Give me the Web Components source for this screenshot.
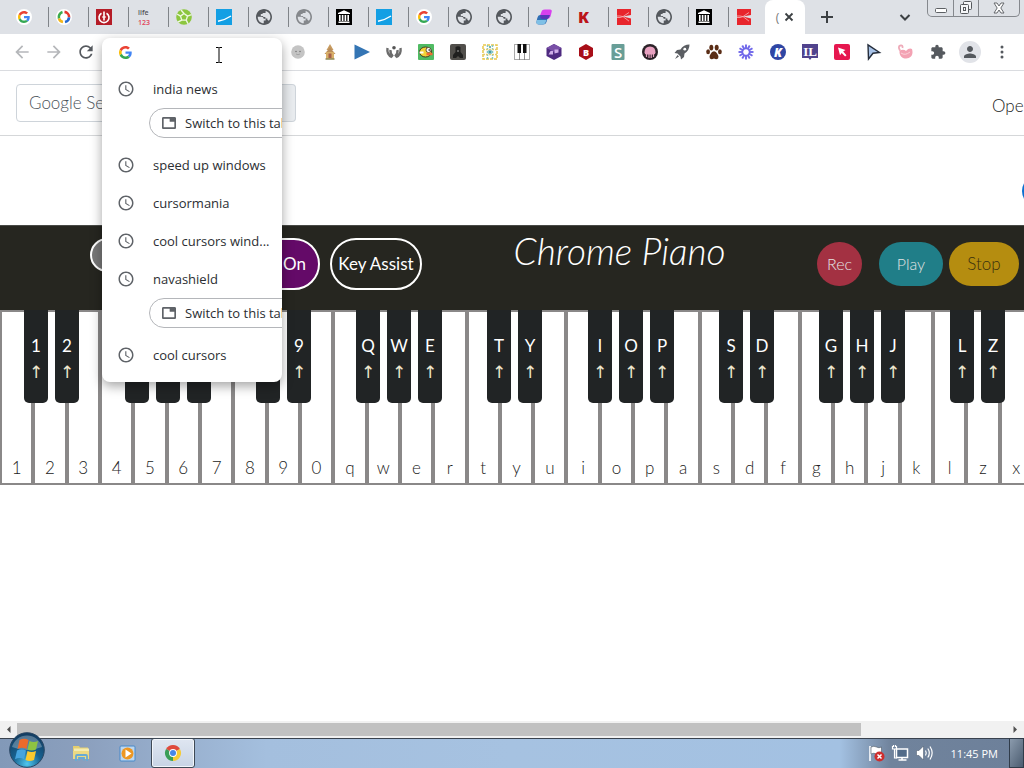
<!DOCTYPE html>
<html lang="en">
<head>
<meta charset="utf-8">
<title>Chrome Piano</title>
<style>
  html, body {
    height: 100%;
    margin: 0;
    overflow: hidden;
  }
  body {
    background: #fff;
    font-family: Lato, "Open Sans", sans-serif;
  }
</style>
</head>
<body>

<desktop-shell>
  <browser-tabs slot="tabs"></browser-tabs>
  <browser-toolbar slot="toolbar">
    <suggestion-list>
      <suggestion-item switchable>india news</suggestion-item>
      <suggestion-item>speed up windows</suggestion-item>
      <suggestion-item>cursormania</suggestion-item>
      <suggestion-item>cool cursors wind...</suggestion-item>
      <suggestion-item switchable>navashield</suggestion-item>
      <suggestion-item>cool cursors</suggestion-item>
    </suggestion-list>
  </browser-toolbar>
  <piano-page slot="page">
    <piano-keyboard></piano-keyboard>
  </piano-page>
  <scroll-strip slot="scroll"></scroll-strip>
  <task-bar slot="taskbar"></task-bar>
</desktop-shell>

<template id="desktop-shell">
  <style>
    :host {
      display: flex;
      flex-direction: column;
      height: 100vh;
      overflow: hidden;
    }
    ::slotted([slot="toolbar"]) { z-index: 2; }
    ::slotted([slot="page"]) { flex: 1; min-height: 0; }
    ::slotted([slot="taskbar"]) { z-index: 3; }
  </style>
  <slot name="tabs"></slot>
  <slot name="toolbar"></slot>
  <slot name="page"></slot>
  <slot name="scroll"></slot>
  <slot name="taskbar"></slot>
</template>

<template id="browser-tabs">
  <style>
    :host {
      display: flex;
      align-items: center;
      height: 34px;
      padding-left: 9px;
      background: #dee1e6;
      font-family: "Open Sans", sans-serif;
      position: relative;
    }
    button {
      display: flex;
      align-items: center;
      justify-content: center;
      padding: 0;
      border: 0;
      background: none;
      color: #3c4043;
    }
    .tabs { display: flex; align-items: center; }
    .tab {
      justify-content: flex-start;
      width: 40px;
      height: 20px;
      padding-left: 7px;
      border-right: 1px solid #808489;
      box-sizing: border-box;
    }
    .tab:last-child { width: 36px; border: 0; }
    .active {
      display: flex;
      align-items: center;
      justify-content: center;
      gap: 5px;
      align-self: stretch;
      width: 40px;
      border-radius: 8px 8px 0 0;
      background: #fff;
      color: #777;
      font-size: 12px;
    }
    .new { width: 24px; height: 24px; margin-left: 10px; }
    .search { width: 24px; height: 24px; margin-left: auto; margin-right: 10px; }
    .window {
      display: flex;
      align-self: flex-start;
      height: 17px;
      margin-right: 4px;
      box-sizing: border-box;
      border: 1px solid #85888d;
      border-top: 0;
      border-radius: 0 0 5px 5px;
    }
    .window button { width: 25px; }
    .window button + button { border-left: 1px solid #85888d; }
    .window .close { width: 41px; }
  </style>
  <div class="tabs" role="tablist"></div>
  <div class="active" role="tab" aria-selected="true"><span>(</span><button aria-label="Close tab"><app-icon name="close" size="10"></app-icon></button></div>
  <button class="new" aria-label="New tab"><app-icon name="plus" size="12"></app-icon></button>
  <button class="search" aria-label="Search tabs"><app-icon name="chevron" size="12"></app-icon></button>
  <div class="window">
    <button aria-label="Minimize"><app-icon name="win-min" size="14"></app-icon></button>
    <button aria-label="Restore"><app-icon name="win-max" size="14"></app-icon></button>
    <button class="close" aria-label="Close"><app-icon name="win-close" size="14"></app-icon></button>
  </div>
</template>

<template id="browser-toolbar">
  <style>
    :host {
      display: flex;
      align-items: center;
      height: 36px;
      padding: 0 6px;
      border-bottom: 1px solid #dadce0;
      background: #fff;
      position: relative;
    }
    button {
      display: flex;
      align-items: center;
      justify-content: center;
      width: 32px;
      height: 32px;
      padding: 0;
      border: 0;
      background: none;
      color: #55595e;
    }
    button:disabled { color: #b5b7ba; }
    .extensions { display: flex; }
    .profile span {
      display: flex;
      align-items: center;
      justify-content: center;
      width: 22px;
      height: 22px;
      border-radius: 50%;
      background: #e1e3e8;
    }
    .omnibox {
      position: relative;
      flex: 1;
      height: 32px;
    }
    ::slotted(suggestion-list) {
      position: absolute;
      top: 2px;
      left: 0;
      right: 0;
    }
  </style>
  <button disabled aria-label="Back"><app-icon name="back" size="20"></app-icon></button>
  <button disabled aria-label="Forward"><app-icon name="forward" size="20"></app-icon></button>
  <button aria-label="Reload"><app-icon name="reload" size="20"></app-icon></button>
  <div class="omnibox"><slot></slot></div>
  <div class="extensions"></div>
  <button class="profile" aria-label="Profile"><span><app-icon name="person" size="18"></app-icon></span></button>
  <button aria-label="Menu"><app-icon name="dots" size="16"></app-icon></button>
</template>

<template id="suggestion-list">
  <style>
    :host {
      display: block;
      box-sizing: border-box;
      padding-bottom: 8px;
      border-radius: 8px;
      background: #fff;
      box-shadow: 0 4px 12px rgba(0, 0, 0, .36);
      font: 14px/20px "Open Sans", sans-serif;
      overflow: hidden;
    }
    .field {
      display: flex;
      align-items: center;
      gap: 12px;
      height: 28px;
      margin-bottom: 4px;
      padding-left: 17px;
      position: relative;
    }
    input {
      flex: 1;
      min-width: 0;
      border: 0;
      outline: 0;
      background: none;
      font: inherit;
    }
    .pointer {
      position: absolute;
      top: 9px;
      right: 55px;
    }
  </style>
  <div class="field">
    <app-icon name="google" size="13"></app-icon>
    <input aria-label="Address and search bar">
    <app-icon class="pointer" name="ibeam" size="16"></app-icon>
  </div>
  <slot></slot>
</template>

<template id="suggestion-item">
  <style>
    :host {
      display: block;
      color: #2b2e32;
      font-size: 13px;
    }
    .row {
      display: flex;
      align-items: center;
      gap: 18px;
      height: 38px;
      padding-left: 15px;
      white-space: nowrap;
    }
    app-icon { color: #5f6368; }
    .extra {
      height: 38px;
      padding-left: 47px;
    }
    button {
      display: flex;
      align-items: center;
      gap: 8px;
      box-sizing: border-box;
      width: 160px;
      height: 30px;
      padding: 0 11px;
      border: 1px solid #b4b6ba;
      border-radius: 15px;
      background: #fff;
      color: inherit;
      font: inherit;
      white-space: nowrap;
    }
    :host(:not([switchable])) .extra { display: none; }
  </style>
  <div class="row"><app-icon name="clock" size="18"></app-icon><span><slot></slot></span></div>
  <div class="extra"><button><app-icon name="tab" size="16"></app-icon>Switch to this tab</button></div>
</template>

<template id="piano-page">
  <style>
    :host {
      display: block;
      position: relative;
      overflow: hidden;
      background: #fff;
    }
    nav {
      display: flex;
      align-items: center;
      justify-content: space-between;
      height: 64px;
      border-bottom: 1px solid #d5d7d9;
      padding-left: 16px;
    }
    form {
      display: flex;
      width: 280px;
      height: 38px;
    }
    input, form button {
      box-sizing: border-box;
      border: 1px solid #ced4da;
      font: 300 17px/24px Lato, sans-serif;
    }
    input {
      flex: 1;
      min-width: 0;
      padding: 0 12px;
      border-radius: 4px 0 0 4px;
      background: #fff;
    }
    input::placeholder { color: #4c535a; opacity: 1; }
    form button {
      width: 60px;
      border-left: 0;
      border-radius: 0 4px 4px 0;
      background: #e9ecef;
    }
    nav a {
      width: 32px;
      padding-top: 4px;
      color: #222;
      font-size: 17px;
      font-weight: 300;
      text-decoration: none;
      white-space: nowrap;
    }
    .stage { height: 89px; }
    .share {
      position: absolute;
      top: 104px;
      right: -30px;
      width: 32px;
      height: 32px;
      padding: 0;
      border: 0;
      border-radius: 50%;
      background: #0b6fd0;
    }
    header {
      display: flex;
      align-items: flex-start;
      box-sizing: border-box;
      height: 85px;
      padding: 12px 5px 0 90px;
      border-top: 1px solid #484a46;
      background: #262620;
      color: #fff;
    }
    header button {
      box-sizing: border-box;
      border: 0;
      border-radius: 26px;
      padding: 0;
      color: #e4e4e4;
      font: 300 16px/24px Lato, sans-serif;
      white-space: nowrap;
    }
    .left { display: flex; align-items: flex-start; gap: 10px; }
    .left button {
      height: 52px;
      border: 2px solid #fff;
      color: #fff;
      font-size: 17px;
      font-weight: 400;
    }
    .left .toggle { width: 100px; height: 34px; background: #777; }
    .left .sustain { width: 120px; padding-right: 12px; background: #640a68; text-align: right; }
    .left .assist { width: 92px; background: transparent; }
    h1 {
      margin: -7px auto 0;
      font: italic 300 37px/40px Lato, cursive;
    }
    .right { display: flex; padding-top: 4px; }
    .right button { height: 44px; }
    .right .rec { width: 45px; margin-right: 17px; background: #a33142; }
    .right .play { width: 64px; margin-right: 6px; background: #207e88; }
    .right .stop { width: 70px; background: #b58d10; color: #3a300e; font-size: 17px; }
  </style>
  <nav>
    <form>
      <input type="text" placeholder="Google Search" aria-label="Google Search">
      <button type="button" aria-label="Search"></button>
    </form>
    <a href="#">Open</a>
  </nav>
  <div class="stage"></div>
  <button class="share" aria-label="Share"></button>
  <header>
    <div class="left">
      <button class="toggle" aria-label="Toggle"></button>
      <button class="sustain">On</button>
      <button class="assist">Key Assist</button>
    </div>
    <h1>Chrome Piano</h1>
    <div class="right">
      <button class="rec">Rec</button>
      <button class="play">Play</button>
      <button class="stop">Stop</button>
    </div>
  </header>
  <slot></slot>
</template>

<template id="piano-keyboard">
  <style>
    :host {
      display: grid;
      width: calc(100% + 9px);
      height: 175px;
      font-size: 17px;
    }
    .white, .black { grid-area: 1 / 1; min-width: 0; }
    .white {
      display: grid;
      grid-auto-flow: column;
      grid-auto-columns: minmax(0, 1fr);
    }
    button {
      margin: 0;
      padding: 0;
      font: inherit;
    }
    .white button {
      display: flex;
      align-items: flex-end;
      justify-content: center;
      padding-bottom: 5px;
      border: 2px solid #8a8888;
      background: #fff;
      color: #222;
      font-weight: 300;
    }
    .black {
      display: flex;
      align-items: flex-start;
      padding-left: 24px;
      z-index: 1;
      pointer-events: none;
    }
    .group { display: flex; gap: 7px; margin-right: 45px; }
    .black button {
      display: flex;
      flex-direction: column;
      align-items: center;
      width: 24px;
      height: 93px;
      padding-top: 23px;
      border: 0;
      border-radius: 0 0 5px 5px;
      background: #212425;
      color: #fff;
      line-height: 26px;
      pointer-events: auto;
    }
    .group:nth-child(4n + 1) { margin-right: 46px; }
    .arrow { font-family: "DejaVu Sans", sans-serif; color: #eee8cf; }
  </style>
  <div class="white"></div>
  <div class="black"></div>
</template>

<template id="scroll-strip">
  <style>
    :host {
      display: flex;
      align-items: center;
      height: 17px;
      background: #f1f1f1;
    }
    button {
      display: flex;
      align-items: center;
      justify-content: center;
      width: 17px;
      height: 17px;
      padding: 0;
      border: 0;
      background: none;
      color: #505050;
    }
    button:first-child { color: #a3a3a3; }
    .track { display: flex; flex: 1; }
    .thumb {
      flex: 29;
      height: 13px;
      background: #c1c1c1;
    }
    .rest { flex: 5; }
  </style>
  <button aria-label="Scroll left"><app-icon name="tri-left" size="9"></app-icon></button>
  <div class="track"><div class="thumb"></div><div class="rest"></div></div>
  <button aria-label="Scroll right"><app-icon name="tri-right" size="9"></app-icon></button>
</template>

<template id="task-bar">
  <style>
    :host {
      display: flex;
      align-items: flex-end;
      height: 29px;
      border-top: 1px solid #39424e;
      background: linear-gradient(90deg, #8299b8 0, #8b9fbd 8%, #a4bfde 26%, #a6c2e1 50%, #a3c1e2 82%, #70839c 87%, #6d809a);
      color: #fff;
      font: 11px/28px "Open Sans", sans-serif;
      position: relative;
    }
    button {
      display: flex;
      align-items: center;
      justify-content: center;
      width: 46px;
      height: 30px;
      padding: 0;
      border: 0;
      background: none;
    }
    .start { height: 36px; width: 36px; margin: 0 13px 0 9px; }
    .running {
      box-sizing: border-box;
      width: 44px;
      margin-left: 1px;
      border: 1px solid #3e4956;
      border-radius: 3px;
      background: linear-gradient(#dfe6f1, #c8d4e5);
      box-shadow: inset 0 0 0 1px #f2f6fb;
    }
    .tray { display: flex; margin-left: auto; }
    .tray button { width: 24px; }
    time { margin: 0 11px 0 15px; white-space: nowrap; }
    .desktop {
      box-sizing: border-box;
      width: 15px;
      border: 1px solid #303c4a;
      background: linear-gradient(120deg, #8b9bad, #4b5c70);
    }
  </style>
  <button class="start" aria-label="Start"><app-icon name="orb" size="36"></app-icon></button>
  <button aria-label="Explorer"><app-icon name="folder" size="18"></app-icon></button>
  <button aria-label="Media Player"><app-icon name="media" size="17"></app-icon></button>
  <button class="running" aria-label="Chrome"><app-icon name="chrome" size="16"></app-icon></button>
  <div class="tray">
    <button aria-label="Action Center"><app-icon name="flag" size="18"></app-icon></button>
    <button aria-label="Network"><app-icon name="network" size="18"></app-icon></button>
    <button aria-label="Volume"><app-icon name="volume" size="18"></app-icon></button>
  </div>
  <time>11:45 PM</time>
  <button class="desktop" aria-label="Show desktop"></button>
</template>

<script>
  const svg = (box, body) => `<svg viewBox="0 0 ${box} ${box}" xmlns="http://www.w3.org/2000/svg">${body}</svg>`
  const glyph = d => svg(24, `<path fill="currentColor" d="${d}"/>`)

  const globe = color => svg(20, `<g transform="translate(-2 -2)">
    <circle cx="12" cy="12" r="9" fill="#dee1e6"/>
    <path fill="${color}" d="M12 2C6.480 2 2 6.480 2 12s4.480 10 10 10 10-4.480 10-10S17.520 2 12 2zM4.200 11.600h4.600c1.700 0 2.700 1 2.700 2.600h2.500v2.300h-2.300v3.400C7.500 19.800 4 16.300 4.200 11.600zM18 16.800l-1.800-1.500v-1.500h-2.500v-1.900h-2.200l-1.300-1.300H8V8.300h2.300V6.900h2.800c1.200 0 1.600-1 .6-1.700.3-.5.5-.7.8-.8 3.300 1 5.500 4 5.500 7.600 0 1.800-.7 3.500-2 4.800z"/></g>`)

  const gLogo = `
    <path fill="#EA4335" d="M24 9.500c3.540 0 6.710 1.220 9.210 3.600l6.850-6.850C35.900 2.380 30.470 0 24 0 14.620 0 6.510 5.380 2.560 13.220l7.980 6.190C12.430 13.720 17.740 9.500 24 9.500z"/>
    <path fill="#4285F4" d="M46.980 24.550c0-1.570-.15-3.090-.38-4.550H24v9.020h12.940c-.58 2.960-2.260 5.480-4.780 7.180l7.730 6c4.510-4.180 7.090-10.360 7.090-17.650z"/>
    <path fill="#FBBC05" d="M10.530 28.590c-.48-1.450-.76-2.990-.76-4.590s.27-3.140.76-4.590l-7.980-6.190C.92 16.460 0 20.120 0 24c0 3.880.92 7.540 2.560 10.780l7.970-6.190z"/>
    <path fill="#34A853" d="M24 48c6.480 0 11.930-2.130 15.890-5.810l-7.730-6c-2.150 1.450-4.920 2.300-8.160 2.300-6.260 0-11.570-4.220-13.470-9.910l-7.980 6.190C6.510 42.620 14.620 48 24 48z"/>`

  const rays = Array.from({ length: 12 }, (_, i) =>
    `<path d="M8 5.200V.5" transform="rotate(${i * 30} 8 8)"/>`).join('')

  const ICONS = {
    // interface
    back: glyph('M20 11H7.830l5.590-5.590L12 4l-8 8 8 8 1.410-1.410L7.830 13H20v-2z'),
    forward: glyph('M12 4l-1.410 1.410L16.170 11H4v2h12.170l-5.580 5.590L12 20l8-8z'),
    reload: glyph('M17.650 6.350C16.200 4.900 14.210 4 12 4c-4.420 0-7.990 3.580-7.990 8s3.570 8 7.990 8c3.730 0 6.840-2.550 7.730-6h-2.080c-.82 2.330-3.040 4-5.650 4-3.310 0-6-2.690-6-6s2.690-6 6-6c1.660 0 3.140.69 4.220 1.780L13 11h7V4l-2.350 2.350z'),
    clock: glyph('M11.990 2C6.470 2 2 6.480 2 12s4.470 10 9.990 10C17.520 22 22 17.520 22 12S17.520 2 11.990 2zM12 20c-4.420 0-8-3.580-8-8s3.580-8 8-8 8 3.580 8 8-3.580 8-8 8zm.5-13H11v6l5.250 3.150.75-1.230-4.500-2.670z'),
    tab: glyph('M20.500 3h-17C2.300 3 1.500 3.900 1.500 5v14c0 1.100.9 2 2 2h17c1.100 0 2-.9 2-2V5c0-1.100-.9-2-2-2zM20 18.500H4v-13h9V10h7v8.500z'),
    puzzle: glyph('M20.500 11H19V7c0-1.100-.9-2-2-2h-4V3.500C13 2.120 11.880 1 10.500 1S8 2.120 8 3.500V5H4c-1.100 0-1.990.9-1.990 2v3.800H3.500c1.490 0 2.700 1.210 2.700 2.700s-1.210 2.700-2.700 2.700H2V20c0 1.100.9 2 2 2h3.800v-1.500c0-1.490 1.210-2.700 2.700-2.700 1.490 0 2.700 1.210 2.700 2.700V22H17c1.100 0 2-.9 2-2v-4h1.500c1.380 0 2.500-1.120 2.500-2.500S21.880 11 20.500 11z'),
    person: glyph('M12 12c2.210 0 4-1.790 4-4s-1.790-4-4-4-4 1.790-4 4 1.790 4 4 4zm0 2c-2.670 0-8 1.340-8 4v2h16v-2c0-2.660-5.330-4-8-4z'),
    dots: svg(16, '<g fill="currentColor"><circle cx="8" cy="3" r="1.500"/><circle cx="8" cy="8" r="1.500"/><circle cx="8" cy="13" r="1.500"/></g>'),
    close: svg(10, '<path d="M1.500 1.500l7 7M8.500 1.500l-7 7" stroke="currentColor" stroke-width="1.800"/>'),
    plus: svg(12, '<path d="M6 0v12M0 6h12" stroke="currentColor" stroke-width="2"/>'),
    chevron: svg(12, '<path d="M1.500 4L6 8.500 10.500 4" fill="none" stroke="currentColor" stroke-width="2"/>'),
    'win-min': svg(14, '<rect x="1.500" y="7.500" width="11" height="4" rx="1" fill="#fff" stroke="#5d6064"/>'),
    'win-max': svg(14, '<g fill="#f4f5f7" stroke="#55585c"><rect x="4.500" y=".5" width="8" height="8" rx="1"/><rect x="1.500" y="3.500" width="8" height="9" rx="1"/><rect x="4.500" y="6.500" width="2" height="3"/></g>'),
    'win-close': svg(14, '<path d="M2 2h3l2 3 2-3h3L8.800 7 12 12H9L7 9l-2 3H2l3.200-5z" fill="#fff" stroke="#66696d"/>'),
    ibeam: svg(16, '<path d="M5 .5h2.500L8 1l.5-.5H11M5 15.500h2.500L8 15l.5.5H11M8 1v14" fill="none" stroke="#000"/>'),
    'tri-left': svg(9, '<path d="M6.500 1v7L3 4.500z" fill="currentColor"/>'),
    'tri-right': svg(9, '<path d="M2.500 1v7L6 4.500z" fill="currentColor"/>'),

    // favicons
    google: svg(48, gLogo),
    'google-tab': svg(48, `<circle cx="24" cy="24" r="24" fill="#fff"/><g transform="translate(6 6) scale(.75)">${gLogo}</g>`),
    ring: svg(16, '<circle cx="8" cy="8" r="8" fill="#fff"/><g fill="none" stroke-width="2.600"><path d="M6.500 3A5.200 5.200 0 0 0 3 9.500" stroke="#3cab4e"/><path d="M3 9.500A5.200 5.200 0 0 0 7 13" stroke="#f4b61b"/><path d="M8.500 2.900a5.200 5.200 0 0 1 4.600 5.500" stroke="#e5392e"/><path d="M13.100 8.400A5.200 5.200 0 0 1 9 13" stroke="#2368d0"/></g>'),
    power: svg(16, '<rect width="16" height="16" fill="#b51c27"/><path d="M5.500 4.300a5 5 0 1 0 5 0M8 2.500v9" fill="none" stroke="#fff" stroke-width="1.600"/><path d="M6 8h4" stroke="#fff"/>'),
    life: svg(16, '<g font-family="Open Sans, sans-serif" font-weight="600" font-size="7"><text x="2" y="6" fill="#55565a">life</text><text x="2" y="16" fill="#e2455c">123</text></g>'),
    ball: svg(16, '<circle cx="8" cy="8" r="7.800" fill="#8cc63f"/><g fill="none" stroke="#eef7e0" stroke-width="1.400"><path d="M8 4.500l3.500 2.600-1.300 4H5.800l-1.300-4zM8 4.500L5 1M11.500 7.100l4-1.500M10.200 11.100l1.800 3.700M5.800 11.100L2 13M4.500 7.100L1 5"/></g>'),
    slash: svg(16, '<rect width="16" height="16" fill="#139fe4"/><path d="M2 12.300Q9 11 15 7" fill="none" stroke="#fff" stroke-width="1.400"/>'),
    globe: globe('#54585d'),
    'globe-light': globe('#85888c'),
    archive: svg(16, '<rect width="16" height="16" fill="#000"/><g fill="#fff"><path d="M8 1.300L14 4v1H2V4zM2.500 12.500h11V14h-11z"/><path d="M3 6h1.600v6H3zM5.800 6h1.600v6H5.800zM8.600 6h1.600v6H8.600zM11.400 6H13v6h-1.600z"/></g>'),
    swirl: svg(16, '<path d="M6 1.500Q7 .5 9 .5h5q2.500 0 1.500 3l-1 4q-1 2.500-4 2.500H5q-2 0-1.400-2.500z" fill="#d740ee"/><path d="M4 6h5.500q3 .5 2 3.500l-1 3.500q-.8 2.500-3.500 2.500H3Q0 15.500.5 12.500L1.300 9Q2 6 4 6z" fill="#2f6fb4"/><path d="M4.500 6H14l-1 2.500Q12 10 10 10H6Q3.500 9.500 4.500 6z" fill="#5637b8"/><path d="M1 11h9.500l-1 2.500Q9 15.500 6.500 15.500H3Q0 15.500.5 12.500z" fill="#7fc0e6"/>'),
    k: svg(16, '<text x="2" y="14" font-family="Open Sans, sans-serif" font-size="16" font-weight="800" fill="#bb141a">K</text>'),
    roblox: svg(16, '<path d="M1 0h14v6L7 7.600 15 9.500V16H1z" fill="#e8252c"/><path d="M1 7h3l3 .6L4 8.500H1M7 7.600L13 3.500M7 7.600l6 4.500" fill="none" stroke="#f4b9bb" stroke-width=".8"/>'),

    // extensions
    face: svg(16, '<circle cx="8" cy="8" r="6.800" fill="#c4c4c4"/><circle cx="6" cy="7.500" r=".8" fill="#777"/><circle cx="10" cy="7.500" r=".8" fill="#777"/><path d="M6 10q2 1.500 4 0" fill="none" stroke="#999" stroke-width=".8"/>'),
    house: svg(16, '<path d="M8 0l3.500 6H4.500z" fill="#c79b60"/><path d="M2.500 10L8 3.500l5.500 6.500z" fill="#b98d5b"/><rect x="4" y="8" width="8" height="7" fill="#d8af69"/><path d="M3.500 15h9" stroke="#8f8a58" stroke-width="1.500"/><rect x="6.500" y="9.500" width="3" height="4.500" fill="#a45e4b"/>'),
    play: svg(16, '<path d="M.5.500L16 8 .5 15.500z" fill="#3475b4"/>'),
    wings: svg(16, '<g fill="none" stroke="#6c6c6c" stroke-width="2.400"><path d="M1.500 4q-1 7 4.500 9M14.500 4q1 7-4.500 9M4.500 6q-.5 4 2.500 6.500M11.500 6q.5 4-2.500 6.500"/></g><circle cx="8" cy="3.800" r="1.800" fill="#555"/>'),
    bird: svg(16, '<rect width="16" height="16" rx="1" fill="#50bb63"/><ellipse cx="7.500" cy="8" rx="6" ry="5" fill="#f2d236" stroke="#433a22"/><circle cx="10.500" cy="6" r="2.500" fill="#fff" stroke="#433a22" stroke-width=".8"/><circle cx="11.200" cy="6" r=".8"/><path d="M8.500 10h6" stroke="#ef6a34" stroke-width="2.500"/><path d="M1.500 8.500h4" stroke="#fff" stroke-width="2"/>'),
    dark: svg(16, '<rect width="16" height="16" rx="2" fill="#514f4b"/><path d="M5.500 3Q8 1.500 10.500 3v5l2.500 3v3h-3l-2-2-2 2H3v-3l2.500-3z" fill="#20201f"/><circle cx="8" cy="7" r="1" fill="#777"/>'),
    mosaic: svg(16, '<g stroke-width="1.500" fill="none"><rect x="1" y="1" width="14" height="14" stroke="#e9c849" stroke-dasharray="3 1"/><path d="M5.500 1v14M10.500 1v14" stroke="#83c7c2" stroke-dasharray="2 1"/><path d="M1 5.500h14M1 10.500h14" stroke="#e2cc6e" stroke-dasharray="2 1"/><path d="M6.500 6.500l3 3M9.500 6.500l-3 3M7 3h2" stroke="#419ca8"/></g>'),
    piano: svg(16, '<rect x=".5" y=".5" width="15" height="15" fill="#fff" stroke="#aaa"/><path d="M5.500 0v16M10.500 0v16" stroke="#777" stroke-width=".8"/><path d="M3.500 0H7v9H3.500zM9 0h3.500v9H9z" fill="#111"/>'),
    'hex-purple': svg(16, '<path d="M8 0l7.500 4v8L8 16 .5 12V4z" fill="#4e2a80"/><path d="M8 0l7.500 4L8 8 .5 4z" fill="#7950a7"/><path d="M2.500 10.500l2-3.500H7v3.500zM8.500 9.500V5.500h4v3z" fill="#cfaee8"/>'),
    'hex-red': svg(16, '<path d="M8 0l7 4v8l-7 4-7-4V4z" fill="#a80e18"/><text x="8" y="11.500" text-anchor="middle" font-family="Open Sans, sans-serif" font-size="9" font-weight="800" fill="#fff">B</text>'),
    s: svg(16, '<rect x="1.500" y="0" width="13" height="16" rx="1" fill="#689e97"/><text x="8" y="13.500" text-anchor="middle" font-family="Open Sans, sans-serif" font-size="15" font-weight="600" fill="#fff">S</text>'),
    octopus: svg(16, '<circle cx="8" cy="8" r="8" fill="#2c2228"/><path d="M2.500 8.500q0-6 5.500-6t5.500 6q0 2-2 2h-7q-2 0-2-2z" fill="#e8a1c0"/><path d="M4.500 9.500V13M7 10v4M9.200 10v4M11.500 9.500V13" stroke="#e8a1c0" stroke-width="1.200"/>'),
    rocket: svg(16, '<path d="M15.500.5q-6 0-9 5L3 6 .5 9l3 .5 3 3L7 15.500 10 13l.5-3.500q5-3 5-9z" fill="#5b5e63"/><circle cx="10.800" cy="5.200" r="1.400" fill="#fff"/><path d="M3.500 11L1 15l4-2.500" fill="#5b5e63"/>'),
    paw: svg(16, '<g fill="#5a2d16"><ellipse cx="5.300" cy="3.600" rx="2" ry="2.900"/><ellipse cx="10.700" cy="3.600" rx="2" ry="2.900"/><ellipse cx="2.100" cy="7.700" rx="1.900" ry="2.500"/><ellipse cx="13.900" cy="7.700" rx="1.900" ry="2.500"/><path d="M8 7.300q2.300 0 3.400 2.700 2 2.500.8 4.200-1.500 1.700-4.200.3-2.700 1.400-4.200-.3Q2.600 12.500 4.600 10 5.700 7.300 8 7.300z"/></g>'),
    sun: svg(16, `<g stroke="#7068ea" stroke-width="1.900">${rays}</g><circle cx="8" cy="8" r="3.800" fill="none" stroke="#7068ea" stroke-width="1.400"/>`),
    'k-round': svg(16, '<circle cx="8" cy="8" r="8" fill="#2f46a4"/><text x="8" y="12.500" text-anchor="middle" font-family="Open Sans, sans-serif" font-size="12" font-weight="800" font-style="italic" fill="#fff">K</text>'),
    il: svg(16, '<path d="M0 0h16v14H9.500L8 16l-1.500-2H0z" fill="#51438d"/><text x="8" y="11.500" text-anchor="middle" font-family="Liberation Serif, serif" font-size="13" font-weight="700" fill="#fff">IL</text>'),
    pick: svg(16, '<rect width="16" height="16" rx="2" fill="#e6174f"/><path d="M4 3.500l7.500 2.600L9.200 7.500l3.300 3.800-1.400 1.300L7.700 9 6 11.300z" fill="#fff"/>'),
    arrow: svg(16, '<path d="M2 .8L13.500 8.500 7 9.200 2.500 15z" fill="#a8c3e8" stroke="#252d3b" stroke-width="1.400"/>'),
    flamingo: svg(16, '<path d="M2 6.500Q-.5 2 2.500 1.500 5 1 4.500 4" fill="none" stroke="#eeabb9" stroke-width="1.800"/><path d="M1.500 6.500Q6 5 8 7q3-3.500 6-2 1.500 5-1 7.500-3 3-8 1.500-4-2-3.500-7.500z" fill="#f3a2b3"/><path d="M3 9q4 3 9-1" fill="none" stroke="#fbd2da"/>'),

    // taskbar
    orb: svg(36, `
      <defs><radialGradient id="orb" cx=".5" cy=".9" r=".9"><stop offset="0" stop-color="#50c7ef"/><stop offset=".45" stop-color="#17618f"/><stop offset="1" stop-color="#123a5e"/></radialGradient></defs>
      <circle cx="18" cy="18" r="17.300" fill="url(#orb)" stroke="#294663"/>
      <path d="M3 15A15.500 15.500 0 0 1 33 15Q18 21 3 15z" fill="#fff" opacity=".28"/>
      <path d="M10.500 8q4.500-2.500 9 0l-2 9q-4.500-2.300-9 0z" fill="#ec6a2b"/><path d="M20.500 9q4 2 8.500 0l-2 8.500q-4.500 2-8.500 0z" fill="#8ec341"/>
      <path d="M8 18.500q4.500-2.300 9 0l-2 8.800q-4.500-2.500-9 0z" fill="#45a4df"/><path d="M18.500 19q4 2 8.500 0l-2 9q-4.500 2-8.500 0z" fill="#fac92e"/>`),
    folder: svg(18, '<path d="M1 2h6l1 1.500h8V13H1z" fill="#e3cd70"/><path d="M2 4.500h15V11H2z" fill="#f5ecb0"/><path d="M1 7h16v8H1z" fill="#ecd983"/><path d="M4 17v-5q0-1 1-1h9q1 0 1 1v5M7 16.500v-2.500h5v2.500" fill="none" stroke="#68aad4" stroke-width="1.800"/>'),
    media: svg(17, '<rect x="1" y="1" width="15" height="15" rx="1" fill="#bed7ef" stroke="#4689ca"/><circle cx="8.500" cy="8.500" r="6" fill="#ee9722"/><path d="M6.500 4.500v8l6-4z" fill="#fff"/>'),
    chrome: svg(16, '<path d="M8 8L1.070 4A8 8 0 0 1 14.930 4z" fill="#df4a3c"/><path d="M8 8l6.930-4A8 8 0 0 1 8 16z" fill="#f6cb35"/><path d="M8 8v8A8 8 0 0 1 1.070 4z" fill="#3a9e56"/><circle cx="8" cy="8" r="3.900" fill="#fff"/><circle cx="8" cy="8" r="3" fill="#4687e8"/>'),
    flag: svg(18, '<path d="M3 2v15" stroke="#fff" stroke-width="1.600"/><path d="M4 3q3-1.500 5.500 0t5 0v7q-2.500 1.500-5 0T4 10z" fill="#fff" stroke="#4a5562" stroke-width=".6"/><circle cx="12.500" cy="12.500" r="5" fill="#cf2d2d"/><path d="M10.500 10.500l4 4M14.500 10.500l-4 4" stroke="#fff" stroke-width="1.500"/>'),
    network: svg(18, '<rect x="5.500" y="5" width="11" height="8.500" fill="#526b89" stroke="#fff" stroke-width="1.500"/><path d="M7.500 16h8M11 13.500V16" stroke="#fff" stroke-width="1.500"/><path d="M1.500 2v3h4V2M3.500 5v9H6M2.500 1v2M4.500 1v2" fill="none" stroke="#fff" stroke-width="1.200"/>'),
    volume: svg(18, '<path d="M1.500 6.500H4L8.500 2v14L4 11.500H1.500z" fill="#fff" stroke="#455366" stroke-width=".5"/><path d="M10.500 6.500q1.500 2.500 0 5M12.800 4.500q3 4.500 0 9M15 2.500q4.300 6.500 0 13" fill="none" stroke="#fff" stroke-width="1.200"/>')
  }

  const TABS = [
    'google-tab', 'ring', 'power', 'life', 'ball', 'slash', 'globe', 'globe-light', 'archive', 'slash',
    'google-tab', 'globe', 'globe', 'swirl', 'k', 'roblox', 'globe', 'archive', 'roblox'
  ]

  const EXTENSIONS = [
    'face', 'house', 'play', 'wings', 'bird', 'dark', 'mosaic', 'piano', 'hex-purple', 'hex-red', 's',
    'octopus', 'rocket', 'paw', 'sun', 'k-round', 'il', 'pick', 'arrow', 'flamingo', 'puzzle'
  ]

  // A space is a black key with no label
  const WHITE_KEYS = '1234567890qwertyuiopasdfghjklzx'
  const BLACK_KEYS = ['12', '   ', ' 9', 'QWE', 'TY', 'IOP', 'SD', 'GHJ', 'LZ']

  class AppIcon extends HTMLElement {
    constructor () {
      super()
      this.attachShadow({ mode: 'open' })
    }

    connectedCallback () {
      const size = this.getAttribute('size') || 16
      this.shadowRoot.innerHTML = `
        <style>
          :host { display: block; flex: none; width: ${size}px; height: ${size}px; }
          svg { display: block; width: 100%; height: 100%; overflow: visible; }
        </style>
        ${ICONS[this.getAttribute('name')]}`
    }
  }

  // Clones the template that carries the element's own tag name
  class TemplateElement extends HTMLElement {
    constructor () {
      super()
      const template = document.getElementById(this.localName)
      this.attachShadow({ mode: 'open' }).appendChild(template.content.cloneNode(true))
      this.fill(this.shadowRoot)
    }

    fill () {}
  }

  class BrowserTabs extends TemplateElement {
    fill (root) {
      root.querySelector('.tabs').innerHTML = TABS.map(name =>
        `<button class="tab" role="tab" aria-label="${name}"><app-icon name="${name}"></app-icon></button>`).join('')
    }
  }

  class BrowserToolbar extends TemplateElement {
    fill (root) {
      root.querySelector('.extensions').innerHTML = EXTENSIONS.map(name =>
        `<button aria-label="${name}"><app-icon name="${name}"></app-icon></button>`).join('')
    }
  }

  class PianoKeyboard extends TemplateElement {
    fill (root) {
      root.querySelector('.white').innerHTML = [...WHITE_KEYS].map(key =>
        `<button>${key}</button>`).join('')
      root.querySelector('.black').innerHTML = BLACK_KEYS.map(group =>
        `<div class="group">${[...group].map(key => this.blackKey(key)).join('')}</div>`).join('')
    }

    blackKey (key) {
      if (key === ' ') return '<button aria-label="Black key"></button>'
      return `<button><span>${key}</span><span class="arrow">↑</span></button>`
    }
  }

  customElements.define('app-icon', AppIcon)
  customElements.define('browser-tabs', BrowserTabs)
  customElements.define('browser-toolbar', BrowserToolbar)
  customElements.define('piano-keyboard', PianoKeyboard)
  for (const name of ['desktop-shell', 'suggestion-list', 'suggestion-item', 'piano-page', 'scroll-strip', 'task-bar']) {
    customElements.define(name, class extends TemplateElement {})
  }
</script>
</body>
</html>
